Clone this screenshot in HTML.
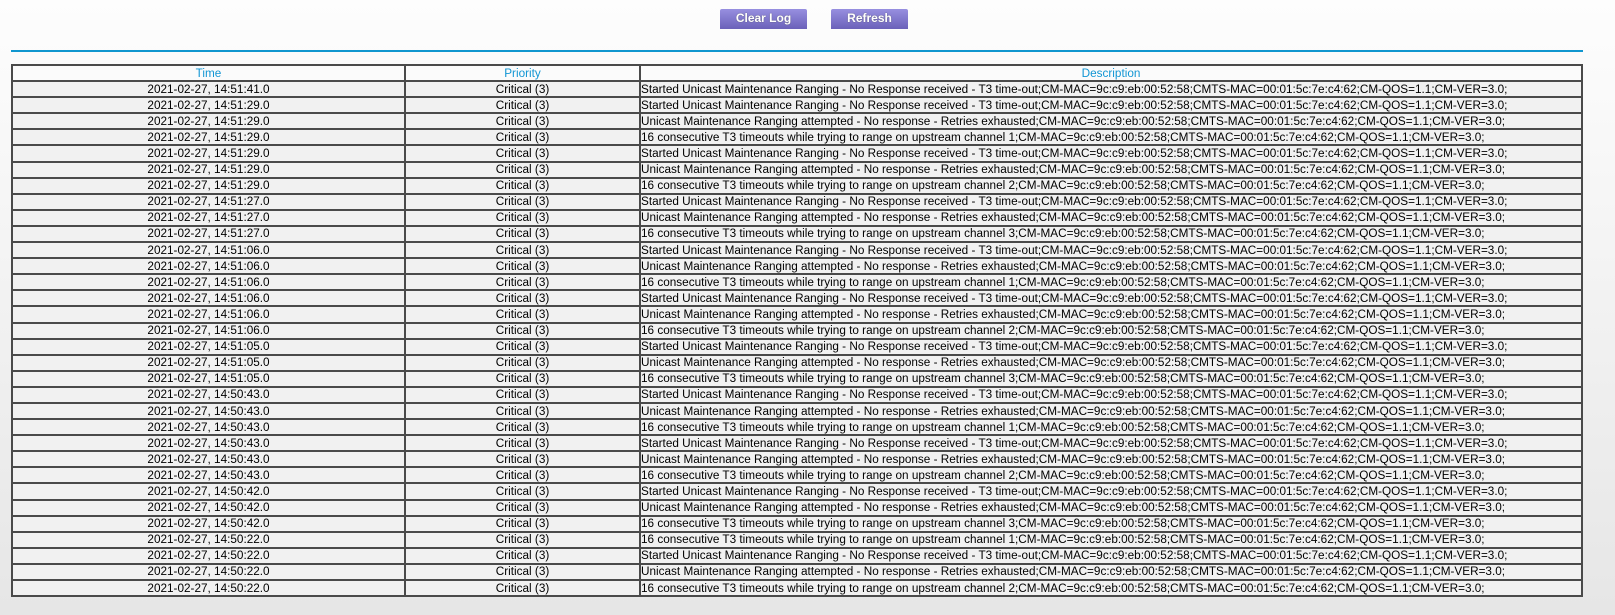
<!DOCTYPE html>
<html><head><style>
html,body{margin:0;padding:0;}
body{width:1615px;height:615px;overflow:hidden;font-family:"Liberation Sans",Arial,sans-serif;font-size:12px;
background:linear-gradient(#fdfdfd 0,#fbfbfb 60px,#eeeeee 400px,#e6e6e6 615px);position:relative;}
.btn{position:absolute;top:9px;height:20px;line-height:19px;text-align:center;color:#fff;font-weight:bold;font-size:12px;
background:linear-gradient(#978fe0,#6b61b9);border-radius:2px 2px 0 0;text-shadow:0 0 1px #555;}
.line{position:absolute;left:11px;top:50px;width:1572px;height:2px;background:#1096cf;}
table{position:absolute;left:11px;top:64px;width:1572px;border-collapse:collapse;border:2px solid #4a4a4a;background:#f1f1f1;table-layout:fixed;}
td,th{border:2px solid #4a4a4a;height:14.1px;padding:0;line-height:13px;font-size:11.75px;color:#000;white-space:nowrap;overflow:hidden;}
th{color:#1296d4;font-weight:normal;background:#fbfbfb;}
td.c{text-align:center}
</style></head><body>
<div class="btn" style="left:720px;width:87px">Clear Log</div>
<div class="btn" style="left:831px;width:77px">Refresh</div>
<div class="line"></div>
<table>
<colgroup><col style="width:393px"><col style="width:235px"><col></colgroup>
<tr><th>Time</th><th>Priority</th><th>Description</th></tr>
<tbody id="b">
</tbody></table>
<script>
var S="Started Unicast Maintenance Ranging - No Response received - T3 time-out;CM-MAC=9c:c9:eb:00:52:58;CMTS-MAC=00:01:5c:7e:c4:62;CM-QOS=1.1;CM-VER=3.0;";
var U="Unicast Maintenance Ranging attempted - No response - Retries exhausted;CM-MAC=9c:c9:eb:00:52:58;CMTS-MAC=00:01:5c:7e:c4:62;CM-QOS=1.1;CM-VER=3.0;";
function C(n){return "16 consecutive T3 timeouts while trying to range on upstream channel "+n+";CM-MAC=9c:c9:eb:00:52:58;CMTS-MAC=00:01:5c:7e:c4:62;CM-QOS=1.1;CM-VER=3.0;";}
var rows=[["14:51:41.0",S],["14:51:29.0",S],["14:51:29.0",U],["14:51:29.0",C(1)],["14:51:29.0",S],["14:51:29.0",U],["14:51:29.0",C(2)],
["14:51:27.0",S],["14:51:27.0",U],["14:51:27.0",C(3)],["14:51:06.0",S],["14:51:06.0",U],["14:51:06.0",C(1)],["14:51:06.0",S],["14:51:06.0",U],["14:51:06.0",C(2)],
["14:51:05.0",S],["14:51:05.0",U],["14:51:05.0",C(3)],["14:50:43.0",S],["14:50:43.0",U],["14:50:43.0",C(1)],["14:50:43.0",S],["14:50:43.0",U],["14:50:43.0",C(2)],
["14:50:42.0",S],["14:50:42.0",U],["14:50:42.0",C(3)],["14:50:22.0",C(1)],["14:50:22.0",S],["14:50:22.0",U],["14:50:22.0",C(2)]];
var h="";rows.forEach(function(r){h+='<tr><td class="c">2021-02-27, '+r[0]+'</td><td class="c">Critical (3)</td><td>'+r[1]+'</td></tr>';});
document.getElementById("b").innerHTML=h;
</script>
</body></html>
